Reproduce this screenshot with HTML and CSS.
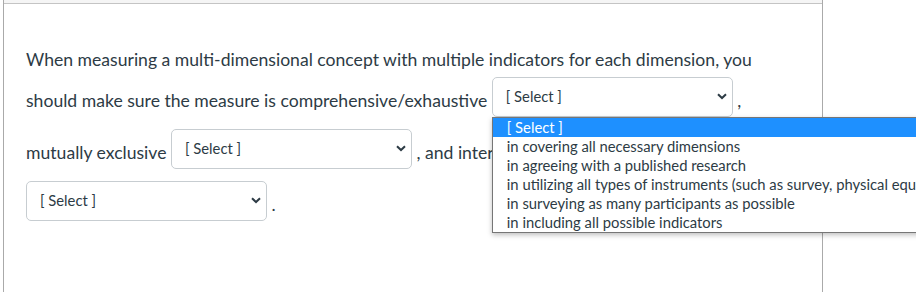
FILE: index.html
```html
<!DOCTYPE html>
<html lang="en">
<head>
    <meta charset="UTF-8">
    <meta name="viewport" content="width=device-width, initial-scale=1.0">
    <title>Quiz question</title>
    <link rel="stylesheet" href="styles.css">
</head>
<body>
    <div class="question">
        <div class="question-header"></div>
        <div class="question-text">
            When measuring a multi-dimensional concept with multiple indicators for each dimension, you
            should make sure the measure is comprehensive/exhaustive
            <span class="select-wrap">
                <select class="answer-select"><option>[ Select ]</option></select>
                <svg class="chevron" width="10" height="7" viewBox="0 0 10 7"><path d="M1 1.2 L5 5 L9 1.2" fill="none" stroke="#2d3b45" stroke-width="2"/></svg>
                <ul class="dropdown-list">
                    <li class="active">[ Select ]</li>
                    <li>in covering all necessary dimensions</li>
                    <li>in agreeing with a published research</li>
                    <li>in utilizing all types of instruments (such as survey, physical equipment, observation)</li>
                    <li>in surveying as many participants as possible</li>
                    <li>in including all possible indicators</li>
                </ul>
            </span> ,
            mutually exclusive
            <span class="select-wrap">
                <select class="answer-select"><option>[ Select ]</option></select>
                <svg class="chevron" width="10" height="7" viewBox="0 0 10 7"><path d="M1 1.2 L5 5 L9 1.2" fill="none" stroke="#2d3b45" stroke-width="2"/></svg>
            </span> , and internally consistent
            <span class="select-wrap">
                <select class="answer-select"><option>[ Select ]</option></select>
                <svg class="chevron" width="10" height="7" viewBox="0 0 10 7"><path d="M1 1.2 L5 5 L9 1.2" fill="none" stroke="#2d3b45" stroke-width="2"/></svg>
            </span> .
        </div>
    </div>
</body>
</html>
```

FILE: styles.css
```css
html {
    overflow: hidden;
}
body {
    margin: 0;
    background: #fff;
    font-family: Lato, "Open Sans", sans-serif;
    color: #2d3b45;
}
.question {
    margin-left: 3px;
    width: 818px;
    min-height: 300px;
    border-left: 1px solid #aaaaaa;
    border-right: 1px solid #aaaaaa;
}
.question-header {
    height: 3px;
    background: #f5f5f5;
    border-bottom: 1px solid #c4c4c4;
}
.question-text {
    padding: 39px 20px 20px 22px;
    font-size: 17.6px;
    line-height: 34px;
}
.select-wrap {
    position: relative;
    display: inline-block;
    vertical-align: middle;
    margin-bottom: 12px;
    line-height: normal;
}
.answer-select {
    display: block;
    appearance: none;
    -webkit-appearance: none;
    box-sizing: border-box;
    width: 241px;
    height: 40px;
    padding: 0 30px 3px 13px;
    border: 1px solid #c7cdd1;
    border-radius: 5px;
    background: #fff;
    font-family: Lato, "Open Sans", sans-serif;
    font-size: 14.8px;
    color: #2d3b45;
}
.chevron {
    position: absolute;
    right: 6px;
    top: 16px;
}
.dropdown-list {
    position: absolute;
    top: 100%;
    left: 0;
    width: 440px;
    margin: 0;
    padding: 0;
    list-style: none;
    background: #fff;
    border: 1px solid #767676;
    box-shadow: 0 2px 5px rgba(0, 0, 0, 0.25);
    overflow: hidden;
    font-size: 14.8px;
    line-height: 19px;
    color: #2d3b45;
    white-space: nowrap;
    z-index: 2;
}
.dropdown-list li {
    padding-left: 14px;
}
.dropdown-list li.active {
    background: #1e90ff;
    color: #fff;
}
```
